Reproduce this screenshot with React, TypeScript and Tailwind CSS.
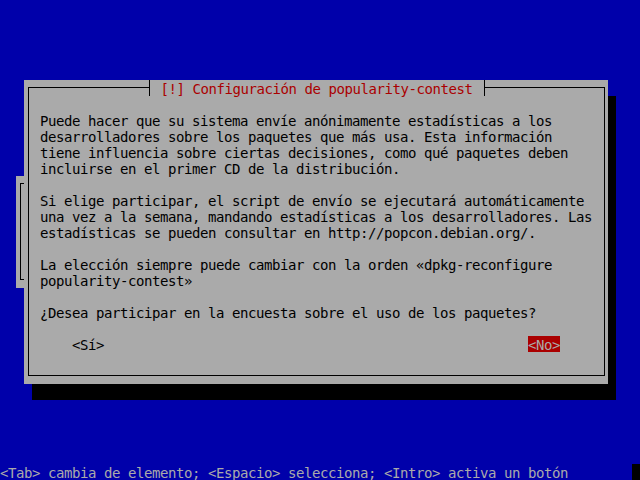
const bodyLines = [
  "Puede hacer que su sistema envíe anónimamente estadísticas a los",
  "desarrolladores sobre los paquetes que más usa. Esta información",
  "tiene influencia sobre ciertas decisiones, como qué paquetes deben",
  "incluirse en el primer CD de la distribución.",
  "",
  "Si elige participar, el script de envío se ejecutará automáticamente",
  "una vez a la semana, mandando estadísticas a los desarrolladores. Las",
  "estadísticas se pueden consultar en http://popcon.debian.org/.",
  "",
  "La elección siempre puede cambiar con la orden «dpkg-reconfigure",
  "popularity-contest»",
  "",
  "¿Desea participar en la encuesta sobre el uso de los paquetes?",
  "",
];

const App = () => {
  return (
    <div className="w-[640px] h-[480px] bg-[#0000aa] flex flex-col pt-[80px] font-['DejaVu_Sans_Mono',monospace] text-[14px] leading-[18px] tracking-[-0.43px] overflow-hidden">
      <div className="flex ml-[16px]">
        {/* box from the previous screen, mostly hidden */}
        <div className="w-[8px] h-[112px] mt-[96px] bg-[#aaaaaa] pl-[4px] pt-[7px]">
          <div className="w-[4px] h-[97px] border-l border-y border-black" />
        </div>

        <div className="w-[584px] h-[304px] bg-[#aaaaaa] shadow-[8px_16px_0_#000] pl-[4px] pr-[3px] pt-[7px] pb-[8px] flex">
          <div className="flex-1 border border-black flex flex-col">
            <div className="-mt-[8px] h-[16px] flex justify-center">
              <div className="w-[8px] h-[16px] flex">
                <div className="w-[4px]" />
                <div className="w-[4px] bg-[#aaaaaa] border-l border-black" />
              </div>
              <span className="h-[16px] bg-[#aaaaaa] text-[#aa0000] whitespace-pre">
                {" [!] Configuración de popularity-contest "}
              </span>
              <div className="w-[8px] h-[16px] flex">
                <div className="w-[5px] bg-[#aaaaaa] border-r border-black" />
                <div className="w-[3px]" />
              </div>
            </div>

            <div className="mt-[16px] pl-[11px] text-black">
              {bodyLines.map((line, i) => (
                <div key={i} className="h-[16px] whitespace-pre">
                  {line}
                </div>
              ))}
              <div className="h-[16px] flex whitespace-pre">
                <span className="ml-[32px]">&lt;Sí&gt;</span>
                <span className="ml-[424px] h-[16px] bg-[#aa0000] text-[#aaaaaa]">&lt;No&gt;</span>
              </div>
            </div>
          </div>
        </div>
      </div>

      <div className="mt-auto h-[16px] flex text-[#aaaaaa] whitespace-pre">
        <span>&lt;Tab&gt; cambia de elemento; &lt;Espacio&gt; selecciona; &lt;Intro&gt; activa un botón</span>
        <div className="flex-1" />
        <div className="w-[8px] h-[16px] bg-black" />
      </div>
    </div>
  );
};

export default App;
